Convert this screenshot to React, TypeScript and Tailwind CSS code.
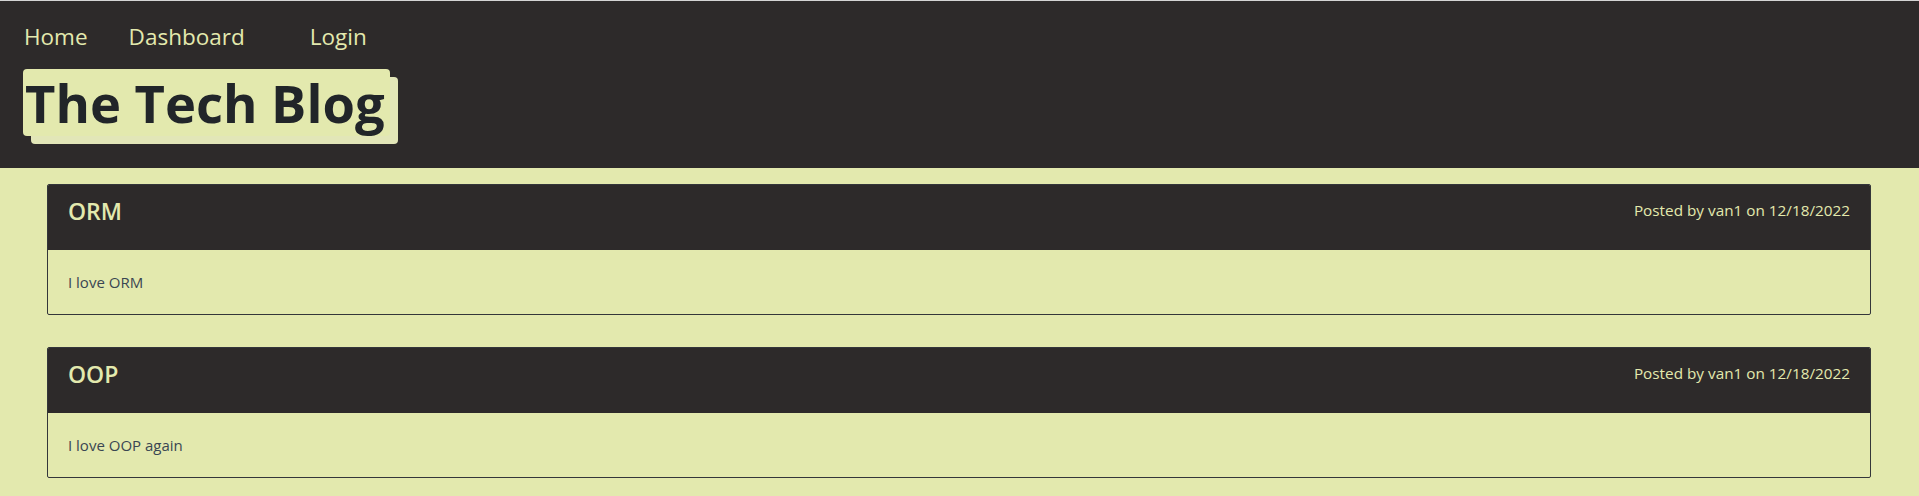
import React from 'react';

type Post = {
  title: string;
  author: string;
  date: string;
  body: string;
};

const posts: Post[] = [
  { title: 'ORM', author: 'van1', date: '12/18/2022', body: 'I love ORM' },
  { title: 'OOP', author: 'van1', date: '12/18/2022', body: 'I love OOP again' },
];

const PostCard: React.FC<{ post: Post }> = ({ post }) => {
  return (
    <div className="border border-[#34363a] rounded-[2px] overflow-hidden">
      {/* Card header */}
      <div className="h-[65px] bg-[#2d2a2a] flex justify-between items-start px-5 pt-[13px]">
        <h2 className="text-[23px] leading-[1.2] font-semibold text-[#e3e9ae]">{post.title}</h2>
        <p className="text-[15.3px] leading-6 text-[#e3e9ae]">
          Posted by {post.author} on {post.date}
        </p>
      </div>
      {/* Card body */}
      <div className="px-5 py-5 text-[15px] leading-6 text-[#3a4652]">{post.body}</div>
    </div>
  );
};

const App: React.FC = () => {
  return (
    <div
      className="min-h-screen bg-[#e3e9ae]"
      style={{ fontFamily: '"Open Sans", "Noto Sans", sans-serif' }}
    >
      {/* Header */}
      <header className="h-[168px] bg-[#2d2a2a] border-t border-[#d4d4d4] pl-[23px]">
        <nav className="flex items-center pt-[18px] h-[54px] text-[22.5px] leading-9 text-[#e3e9ae]">
          <a className="ml-[1px]">Home</a>
          <a className="ml-[41px]">Dashboard</a>
          <a className="ml-[65px]">Login</a>
        </nav>
        <div className="mt-[14px]">
          <h1 className="inline-block w-[367px] h-[67px] pl-[2px] rounded-[4px] bg-[#e3e9ae] shadow-[8px_8px_0_#e2e6b8] text-[52.5px] leading-[67px] font-bold text-[#212529] whitespace-nowrap">
            The Tech Blog
          </h1>
        </div>
      </header>

      {/* Posts */}
      <main className="pl-[47px] pr-[48px] pt-[16px] pb-6 flex flex-col gap-[32px]">
        {posts.map((post) => (
          <PostCard key={post.title} post={post} />
        ))}
      </main>
    </div>
  );
};

export default App;
